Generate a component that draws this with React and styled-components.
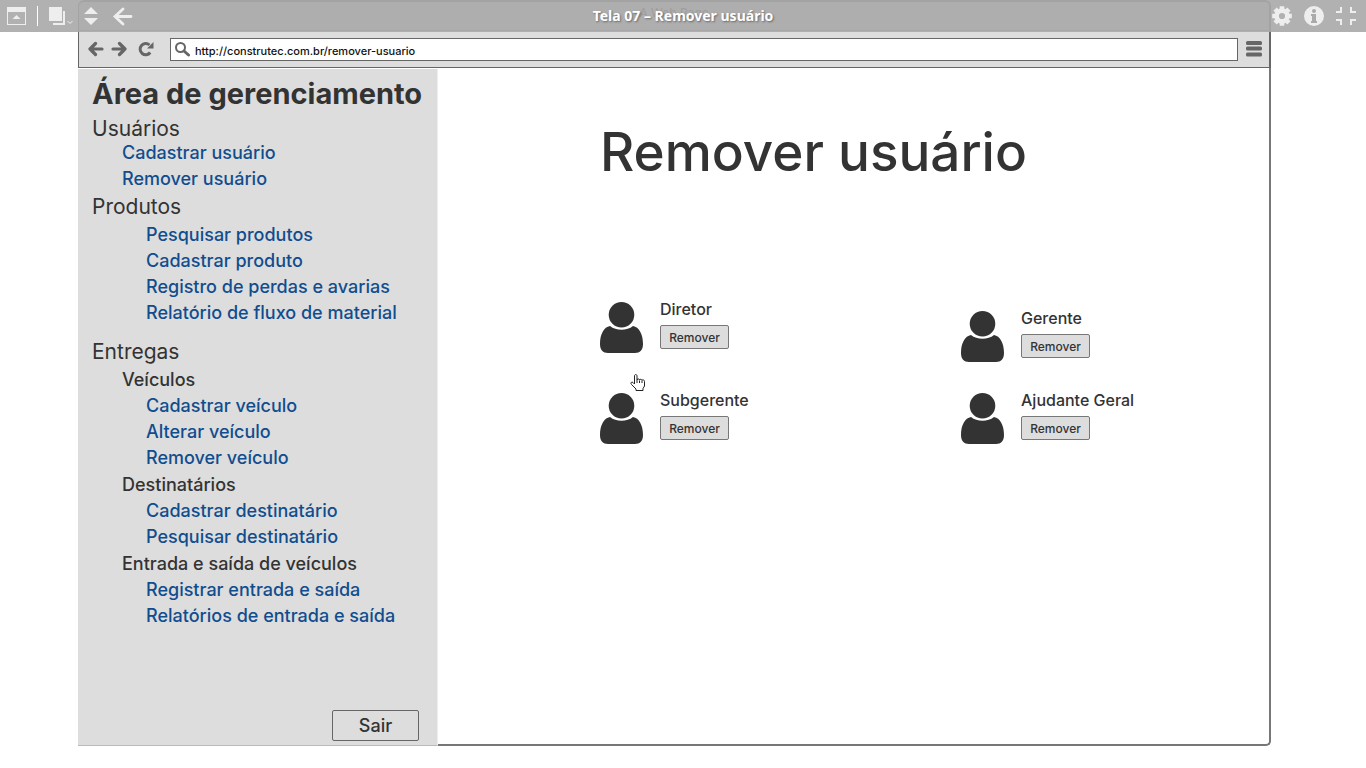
import React from 'react';
import styled, { createGlobalStyle } from 'styled-components';

const GlobalStyle = createGlobalStyle`
  * { box-sizing: border-box; }
  body { margin: 0; background: #fff; color: #333; font-family: Inter, "Liberation Sans", sans-serif; font-weight: 500; }
  h1, h2, h3, h4, p, ul { margin: 0; padding: 0; font-weight: 500; }
  ul { list-style: none; }
  button, input { font-family: inherit; font-weight: 500; color: inherit; }
  svg { display: block; }
`;

const Screen = styled.div`
  position: relative;
  min-height: 100vh;
  padding: 0 95px 22px 78px;
  display: flex;
  flex-direction: column;
`;

const PreviewBar = styled.header`
  position: absolute;
  inset: 0 0 auto 0;
  z-index: 2;
  height: 32px;
  display: grid;
  grid-template-columns: 1fr auto 1fr;
  align-items: center;
  background: rgba(169, 169, 169, 0.91);
  color: #eee;
`;

const PreviewTitle = styled.p`
  font: 700 14px/32px "Noto Sans", sans-serif;
  color: #fff;
  text-shadow: 1px 1px 2px rgba(0, 0, 0, 0.4);
`;

const ToolGroup = styled.div`
  display: flex;
  align-items: center;
  gap: ${(p) => p.$gap}px;
  justify-content: ${(p) => (p.$end ? 'flex-end' : 'flex-start')};
  padding: 0 ${(p) => (p.$end ? 10 : 0)}px 0 ${(p) => (p.$end ? 0 : 7)}px;
`;

const IconButton = styled.button`
  display: block;
  padding: 0;
  border: 0;
  background: none;
  color: inherit;
  cursor: pointer;
`;

const Divider = styled.span`
  width: 1px;
  height: 20px;
  background: #fff;
`;

const Browser = styled.div`
  flex: 1;
  display: flex;
  flex-direction: column;
`;

const Chrome = styled.div`
  border: 1px solid #666;
  border-top-width: 2px;
  border-right-width: 2px;
  border-radius: 6px 6px 0 0;
  background: #ddd;
`;

const WindowTitle = styled.p`
  height: 29px;
  border-bottom: 1px solid #999;
  font-size: 12px;
  line-height: 22px;
  text-align: center;
`;

const AddressRow = styled.div`
  height: 36px;
  display: flex;
  align-items: center;
  gap: 8px;
  padding: 0 7px 0 9px;
  color: #666;
`;

const NavButtons = styled.div`
  display: flex;
  gap: 7px;
  margin-right: 4px;
`;

const AddressBox = styled.label`
  flex: 1;
  height: 23px;
  display: flex;
  align-items: center;
  gap: 5px;
  padding: 0 4px;
  border: 1px solid #666;
  background: #fff;
`;

const AddressInput = styled.input`
  flex: 1;
  min-width: 0;
  padding: 3px 0 0;
  border: 0;
  outline: 0;
  background: none;
  color: #111;
  font-size: 11px;
  line-height: 18px;
`;

const Body = styled.div`
  flex: 1;
  display: flex;
`;

const Sidebar = styled.nav`
  flex: 0 0 360px;
  min-width: 0;
  display: flex;
  flex-direction: column;
  margin-top: 1px;
  padding: 7px 10px 4px 14px;
  border-right: 1px solid #eee;
  border-bottom: 1px solid #bbb;
  background: #ddd;
`;

const SideTitle = styled.h2`
  && { font-weight: 700; }
  font-size: 29px;
  line-height: 36px;
  white-space: nowrap;
`;

const Section = styled.section`
  margin-top: ${(p) => p.$before}px;
`;

const SectionTitle = styled.h3`
  && { font-weight: 400; }
  margin-bottom: ${(p) => p.$after}px;
  font-size: 21px;
  line-height: 22px;
`;

const DeliveryGroups = styled.div`
  display: grid;
  gap: 1px;
`;

const GroupTitle = styled.h4`
  margin-left: 30px;
  font-size: 18px;
  line-height: 26px;
`;

const LinkList = styled.ul`
  padding-left: ${(p) => (p.$shallow ? 30 : 54)}px;
  font-size: 18px;
  line-height: 26px;
  white-space: nowrap;
`;

const SideLink = styled.a`
  color: #114d8e;
  text-decoration: none;
`;

const ExitButton = styled.button`
  align-self: flex-end;
  width: 87px;
  height: 31px;
  margin: auto 8px 0 0;
  padding: 0;
  border: 1px solid #666;
  border-radius: 2px;
  background: #ddd;
  font-size: 18px;
  line-height: 28px;
`;

const Main = styled.main`
  position: relative;
  flex: 1;
  min-width: 0;
  padding: 46px 0 46px 162px;
  border: solid #777;
  border-width: 0 2px 2px 0;
  border-bottom-right-radius: 5px;
`;

const PageTitle = styled.h1`
  font-size: 53px;
  line-height: 76px;
`;

const People = styled.div`
  display: grid;
  grid-template-columns: 361px auto;
  justify-content: start;
  margin-top: 112px;
`;

const PeopleColumn = styled.div`
  display: flex;
  flex-direction: column;
  gap: ${(p) => (p.$lowered ? 31 : 40)}px;
  padding-top: ${(p) => (p.$lowered ? 9 : 0)}px;
`;

const PersonCard = styled.article`
  display: flex;
  gap: 17px;
  height: 51px;
`;

const PersonName = styled.h2`
  margin-bottom: 9px;
  font-size: 16px;
  line-height: 14px;
  white-space: nowrap;
`;

const RemoveButton = styled.button`
  display: block;
  width: 69px;
  height: 24px;
  padding: 0;
  border: 1px solid #777;
  border-radius: 2px;
  background: #ddd;
  font-size: 12px;
`;

const Pointer = styled.svg`
  position: absolute;
  left: 192px;
  top: 306px;
`;

const USER_LINKS = ['Cadastrar usuário', 'Remover usuário'];
const PRODUCT_LINKS = ['Pesquisar produtos', 'Cadastrar produto', 'Registro de perdas e avarias', 'Relatório de fluxo de material'];
const DELIVERY_GROUPS = [
  ['Veículos', ['Cadastrar veículo', 'Alterar veículo', 'Remover veículo']],
  ['Destinatários', ['Cadastrar destinatário', 'Pesquisar destinatário']],
  ['Entrada e saída de veículos', ['Registrar entrada e saída', 'Relatórios de entrada e saída']],
];

function Links({ items, shallow }) {
  return (
    <LinkList $shallow={shallow}>
      {items.map((item) => (
        <li key={item}><SideLink href="#">{item}</SideLink></li>
      ))}
    </LinkList>
  );
}

function Person({ name }) {
  return (
    <PersonCard>
      <svg width="43" height="51" viewBox="0 0 43 51" fill="#333" aria-hidden="true">
        <circle cx="21.5" cy="12.8" r="12.8" />
        <path d="M10 24C4 25 0 32 0 42c0 6 3 9 8 9h27c5 0 8-3 8-9 0-10-4-17-10-18C27 29 16 29 10 24Z" />
      </svg>
      <div>
        <PersonName>{name}</PersonName>
        <RemoveButton type="button">Remover</RemoveButton>
      </div>
    </PersonCard>
  );
}

function NavArrow({ forward }) {
  return (
    <svg width="16" height="16" viewBox="0 0 16 16" fill="none" stroke="currentColor" strokeWidth="3.2" strokeLinecap="round" strokeLinejoin="round">
      <path d={forward ? 'M2 8h12M8.5 2.5 14 8l-5.500 5.500' : 'M14 8H2M7.500 2.500 2 8l5.500 5.500'} />
    </svg>
  );
}

export default function App() {
  return (
    <Screen>
      <GlobalStyle />
      <PreviewBar>
        <ToolGroup $gap={11}>
          <IconButton aria-label="Painel">
            <svg width="19" height="18" viewBox="0 0 19 18">
              <path d="M0 0h19v18H0zM1 5v12h17V5z" fill="currentColor" fillRule="evenodd" />
              <path d="M5.500 12 9.500 8l4 4z" fill="currentColor" />
            </svg>
          </IconButton>
          <Divider />
          <IconButton aria-label="Telas">
            <svg width="24" height="20" viewBox="0 0 24 20">
              <path d="M0 1h13v14H0zM14 5h2v14H4v-2h10z" fill="currentColor" />
              <path d="m18.500 15 2.500 2.500 2.500-2.500" fill="none" stroke="currentColor" />
            </svg>
          </IconButton>
          <IconButton aria-label="Trocar tela">
            <svg width="14" height="18" viewBox="0 0 14 18" fill="currentColor">
              <path d="m0 7 7-7 7 7zM0 11h14l-7 7z" />
            </svg>
          </IconButton>
          <IconButton aria-label="Voltar à tela anterior">
            <svg width="24" height="20" viewBox="0 0 24 20" fill="none" stroke="currentColor" strokeWidth="2.800" strokeLinecap="round">
              <path d="M22 10.500H6M14 3 6 10.500 14 18" />
            </svg>
          </IconButton>
        </ToolGroup>
        <PreviewTitle>Tela 07 – Remover usuário</PreviewTitle>
        <ToolGroup $gap={12} $end>
          <IconButton aria-label="Configurações">
            <svg width="20" height="20" viewBox="-10 -10 20 20" fill="none" stroke="currentColor">
              <circle r="5.400" strokeWidth="4.600" />
              {[0, 45, 90, 135].map((a) => (
                <path key={a} d="M0-9.800V-7M0 7v2.800" strokeWidth="4.600" transform={`rotate(${a})`} />
              ))}
            </svg>
          </IconButton>
          <IconButton aria-label="Informações">
            <svg width="20" height="20" viewBox="0 0 20 20">
              <circle cx="10" cy="10" r="10" fill="currentColor" />
              <circle cx="10" cy="5" r="2" fill="#aaa" />
              <path d="M7 8h5v7h1v2H7v-2h1v-5H7z" fill="#aaa" />
            </svg>
          </IconButton>
          <IconButton aria-label="Sair da tela cheia">
            <svg width="20" height="18" viewBox="0 0 20 18" fill="none" stroke="currentColor" strokeWidth="2">
              <path d="M0 5h5V0M15 0v5h5M0 13h5v5M15 18v-5h5" />
            </svg>
          </IconButton>
        </ToolGroup>
      </PreviewBar>

      <Browser>
        <Chrome>
          <WindowTitle>A Web Page</WindowTitle>
          <AddressRow>
            <NavButtons>
              <IconButton aria-label="Voltar"><NavArrow /></IconButton>
              <IconButton aria-label="Avançar"><NavArrow forward /></IconButton>
              <IconButton aria-label="Recarregar">
                <svg width="24" height="16" viewBox="-4 0 24 16" fill="none" stroke="currentColor">
                  <path d="M12.200 11.500A5.600 5.600 0 1 1 11.500 4" strokeWidth="3" />
                  <path d="M15.500 1v6.500H9z" fill="currentColor" stroke="none" />
                </svg>
              </IconButton>
            </NavButtons>
            <AddressBox>
              <svg width="15" height="15" viewBox="0 0 15 15" fill="none" stroke="currentColor" aria-hidden="true">
                <circle cx="5.500" cy="5.500" r="4.500" strokeWidth="2" />
                <path d="m9 9 4.500 4" strokeWidth="3" strokeLinecap="round" />
              </svg>
              <AddressInput aria-label="Endereço" defaultValue="http://construtec.com.br/remover-usuario" />
            </AddressBox>
            <IconButton aria-label="Menu">
              <svg width="16" height="16" viewBox="0 0 16 16" fill="currentColor">
                <rect width="16" height="4" rx="1.500" />
                <rect y="5.500" width="16" height="4" rx="1.500" />
                <rect y="11.500" width="16" height="4" rx="1.500" />
              </svg>
            </IconButton>
          </AddressRow>
        </Chrome>

        <Body>
          <Sidebar>
            <SideTitle>Área de gerenciamento</SideTitle>
            <Section $before={6}>
              <SectionTitle $after={0}>Usuários</SectionTitle>
              <Links items={USER_LINKS} shallow />
            </Section>
            <Section $before={4}>
              <SectionTitle $after={4}>Produtos</SectionTitle>
              <Links items={PRODUCT_LINKS} />
            </Section>
            <Section $before={15}>
              <SectionTitle $after={4}>Entregas</SectionTitle>
              <DeliveryGroups>
                {DELIVERY_GROUPS.map(([title, items]) => (
                  <div key={title}>
                    <GroupTitle>{title}</GroupTitle>
                    <Links items={items} />
                  </div>
                ))}
              </DeliveryGroups>
            </Section>
            <ExitButton type="button">Sair</ExitButton>
          </Sidebar>
          <Main>
            <PageTitle>Remover usuário</PageTitle>
            <People>
              <PeopleColumn>
                <Person name="Diretor" />
                <Person name="Subgerente" />
              </PeopleColumn>
              <PeopleColumn $lowered>
                <Person name="Gerente" />
                <Person name="Ajudante Geral" />
              </PeopleColumn>
            </People>
            <Pointer width="16" height="18" viewBox="0 0 16 18" fill="#fff" stroke="#222" strokeLinejoin="round" aria-hidden="true">
              <path d="M4.500 9V2c0-2 2.500-2 2.500 0v4c0-1.500 2.500-1.500 2.500 0 0-1 2.500-1 2.500.5 0-1 2.500-1 2.500 1V12L13 14.500V16.500H6V15L1.500 10.500C0 8.500 2 7.500 3 8.500L4.500 10z" />
              <path d="M7 6v3M9.500 6.500V9M12 7v2" fill="none" />
            </Pointer>
          </Main>
        </Body>
      </Browser>
    </Screen>
  );
}
